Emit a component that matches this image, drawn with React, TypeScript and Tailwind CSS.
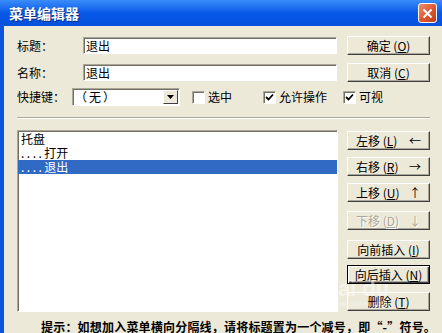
import React from 'react';

const sunken =
  'border border-t-[#aca899] border-l-[#aca899] border-r-white border-b-white shadow-[inset_1px_1px_0_#716f64]';

function Btn({
  children,
  focused,
  disabled,
  className = '',
}: {
  children: React.ReactNode;
  focused?: boolean;
  disabled?: boolean;
  className?: string;
}) {
  const edge = focused
    ? 'border border-black shadow-[inset_1px_1px_0_#fff,inset_-1px_-1px_0_#404040,inset_-2px_-2px_0_#aca899]'
    : 'border border-t-white border-l-white border-r-[#404040] border-b-[#404040] shadow-[inset_-1px_-1px_0_#aca899]';
  return (
    <div
      className={`w-[83px] h-[19px] shrink-0 flex items-center bg-[#ece9d8] leading-none ${edge} ${
        disabled ? 'text-[#aca899] [text-shadow:1px_1px_0_#fff]' : 'text-black'
      } ${className}`}
    >
      {children}
    </div>
  );
}

function Check({ checked, label, w }: { checked?: boolean; label: string; w: string }) {
  return (
    <div className={`flex items-center gap-[3px] ${w}`}>
      <div className={`w-[13px] h-[13px] bg-white flex items-center justify-center ${sunken}`}>
        {checked && (
          <svg width="9" height="9" viewBox="0 0 9 9">
            <path d="M1 4 L3.5 6.5 L8 1.5" stroke="#000" strokeWidth="1.8" fill="none" />
          </svg>
        )}
      </div>
      <span>{label}</span>
    </div>
  );
}

export default function App() {
  const items = [
    { text: '托盘', dots: false },
    { text: '打开', dots: true },
    { text: '退出', dots: true, selected: true },
  ];

  return (
    <div className="w-[442px] h-[333px] overflow-hidden flex flex-col bg-[#0a54e0] font-['Noto_Sans_CJK_SC','Liberation_Sans',sans-serif] text-[12px] text-black">
      {/* title bar */}
      <div className="h-[26px] shrink-0 flex items-center justify-between pl-[9px] pr-[5px] bg-gradient-to-b from-[#3a8cfa] via-[#0858e8] to-[#0450dc]">
        <span className="text-white font-bold text-[14px] leading-none [text-shadow:1px_1px_0_#0a2a80]">
          菜单编辑器
        </span>
        <div className="w-[19px] h-[20px] rounded-[3px] border border-white bg-gradient-to-br from-[#ee8b6a] via-[#df5a32] to-[#c23a14] flex items-center justify-center">
          <svg width="11" height="11" viewBox="0 0 11 11">
            <path d="M1.5 1.5 L9.5 9.5 M9.5 1.5 L1.5 9.5" stroke="#fff" strokeWidth="2" />
          </svg>
        </div>
      </div>

      {/* body */}
      <div className="relative flex-1 min-h-0 overflow-hidden ml-[4px] bg-[#ece9d8] flex flex-col pl-[13px] pt-[10px]">
        <div className="flex items-center h-[19px] shrink-0">
          <span className="w-[66px]">标题：</span>
          <div className={`w-[254px] h-[17px] bg-white flex items-center pl-[2px] ${sunken}`}>退出</div>
          <Btn className="ml-[10px] justify-center">
            确定 (<span className="underline">O</span>)
          </Btn>
        </div>
        <div className="flex items-center h-[19px] shrink-0 mt-[8px]">
          <span className="w-[66px]">名称：</span>
          <div className={`w-[254px] h-[17px] bg-white flex items-center pl-[2px] ${sunken}`}>退出</div>
          <Btn className="ml-[10px] justify-center">
            取消 (<span className="underline">C</span>)
          </Btn>
        </div>
        <div className="flex items-center h-[18px] shrink-0 mt-[6px]">
          <span className="w-[55px]">快捷键：</span>
          <div className={`w-[108px] h-[18px] bg-white flex items-center justify-between pl-[2px] pr-[1px] ${sunken}`}>
            <span className="tracking-[2px]">（无）</span>
            <div className="w-[15px] h-[14px] bg-[#ece9d8] border border-t-white border-l-white border-r-[#404040] border-b-[#404040] flex items-center justify-center">
              <svg width="7" height="4" viewBox="0 0 7 4">
                <path d="M0 0 H7 L3.5 4 Z" fill="#000" />
              </svg>
            </div>
          </div>
          <div className="ml-[12px] flex items-center">
            <Check label="选中" w="w-[71px]" />
            <Check label="允许操作" checked w="w-[80px]" />
            <Check label="可视" checked w="w-[40px]" />
          </div>
        </div>

        <div className="mt-[11px] shrink-0 w-[413px] h-[2px] border-t border-t-[#aca899] border-b border-b-white" />

        <div className="flex shrink-0 mt-[11px]">
          <div className={`w-[321px] h-[182px] bg-white pt-[1px] ${sunken} border-l-[#716f64]`}>
            {items.map((it) => (
              <div
                key={it.text}
                className={`h-[14px] leading-[14px] pl-[3px] ${it.selected ? 'bg-[#316ac5] text-white' : ''}`}
              >
                {it.dots && <span className="tracking-[2.5px]">....</span>}
                {it.text}
              </div>
            ))}
          </div>

          <div className="ml-[9px] flex flex-col">
            <Btn className="mt-[1px] justify-between pl-[8px] pr-[8px]">
              <span>左移 (<span className="underline">L</span>)</span>
              <span>←</span>
            </Btn>
            <Btn className="mt-[7px] justify-between pl-[8px] pr-[8px]">
              <span>右移 (<span className="underline">R</span>)</span>
              <span>→</span>
            </Btn>
            <Btn className="mt-[7px] justify-between pl-[8px] pr-[8px]">
              <span>上移 (<span className="underline">U</span>)</span>
              <span>↑</span>
            </Btn>
            <Btn disabled className="mt-[9px] justify-between pl-[8px] pr-[8px]">
              <span>下移 (<span className="underline">D</span>)</span>
              <span>↓</span>
            </Btn>
            <Btn className="mt-[10px] justify-center">
              向前插入 (<span className="underline">I</span>)
            </Btn>
            <Btn focused className="mt-[6px] justify-center">
              向后插入 (<span className="underline">N</span>)
            </Btn>
            <Btn className="mt-[8px] justify-center">
              删除 (<span className="underline">T</span>)
            </Btn>
          </div>
        </div>

        <div className="mt-[8px] shrink-0 ml-[24px] leading-[14px] font-bold whitespace-nowrap tracking-[0.2px]">
          提示：如想加入菜单横向分隔线，请将标题置为一个减号，即“-”符号。
        </div>

        {/* watermark */}
        <div className="absolute left-[318px] top-[252px] flex flex-col items-center text-white/50 pointer-events-none">
          <span className="font-['Liberation_Sans',sans-serif] font-bold text-[22px] leading-none">Bai du</span>
          <span className="font-['Liberation_Sans',sans-serif] text-[8px] leading-none">jingyan.baidu.com</span>
        </div>
      </div>
    </div>
  );
}
